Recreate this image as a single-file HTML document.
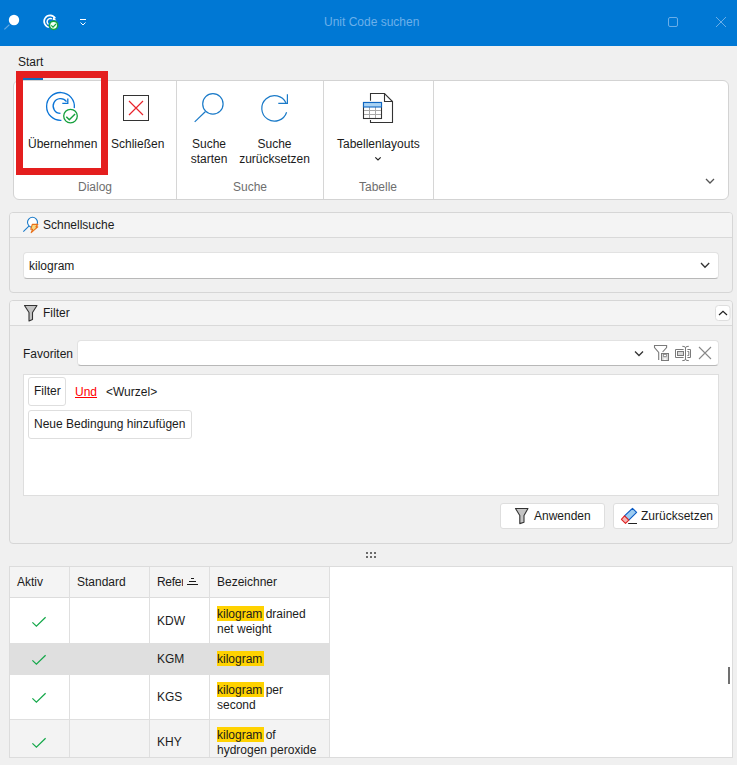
<!DOCTYPE html>
<html><head><meta charset="utf-8">
<style>
*{margin:0;padding:0;box-sizing:border-box}
html,body{width:737px;height:765px;overflow:hidden;background:#f0f0f0;font-family:"Liberation Sans",sans-serif;font-size:12px;color:#1b1b1b}
.a{position:absolute}
.t{position:absolute;white-space:nowrap;line-height:15px}
svg{position:absolute;overflow:visible}
</style></head><body>
<!-- title bar -->
<div class="a" style="left:0;top:0;width:737px;height:46px;background:#0078d4"></div>
<div class="t" style="left:324px;top:15px;color:#6cb0ea;">Unit Code suchen</div>
<svg style="left:0;top:0" width="737" height="46">
  <circle cx="14" cy="20" r="5.2" fill="#fff"/>
  <line x1="9.4" y1="24.6" x2="4.4" y2="29.4" stroke="#62a8e2" stroke-width="1.3"/>
  <path d="M49.5 27.3 A6 6 0 1 1 55.3 18.3" fill="none" stroke="#fff" stroke-width="1.6"/>
  <path d="M49 24.6 A3.2 3.2 0 1 1 51.9 18.9" fill="none" stroke="#fff" stroke-width="1.5"/>
  <path d="M53.2 16.8 L56.4 20.4 L52.6 20.6 Z" fill="#fff"/>
  <circle cx="53.6" cy="25.3" r="5.2" fill="#0078d4"/>
  <circle cx="53.6" cy="25.3" r="4.1" fill="#f4fff6" stroke="#16a53e" stroke-width="1.5"/>
  <path d="M51.3 25.4 L53 27.1 L56 24" fill="none" stroke="#16a53e" stroke-width="1.2"/>
  <line x1="80" y1="19.5" x2="86" y2="19.5" stroke="#fff" stroke-width="1"/>
  <path d="M80.5 22.5 L83 25 L85.5 22.5" fill="none" stroke="#fff" stroke-width="1"/>
  <rect x="668.5" y="17.5" width="9" height="9" rx="1.5" fill="none" stroke="#6aaee8" stroke-width="1"/>
  <path d="M716 17 L726 27 M726 17 L716 27" stroke="#6aaee8" stroke-width="1"/>
</svg>

<!-- tab -->
<div class="t" style="left:18px;top:55px;">Start</div>

<!-- ribbon -->
<div class="a" style="left:13px;top:80px;width:716px;height:120px;background:#fff;border:1px solid #d3d3d3;border-radius:6px"></div>
<div class="a" style="left:23px;top:78px;width:20px;height:2px;background:#0f6cbd"></div>
<div class="a" style="left:176px;top:81px;width:1px;height:118px;background:#d6d6d6"></div>
<div class="a" style="left:323px;top:81px;width:1px;height:118px;background:#d6d6d6"></div>
<div class="a" style="left:433px;top:81px;width:1px;height:118px;background:#d6d6d6"></div>

<svg style="left:0;top:0" width="737" height="210">
  <!-- uebernehmen icon -->
  <path d="M61.4 120.3 A13.9 13.9 0 1 1 74.3 108.2" fill="none" stroke="#0a74d6" stroke-width="1.3"/>
  <path d="M60.5 113.4 A7.4 7.4 0 1 1 66.5 101.6" fill="none" stroke="#0a74d6" stroke-width="1.3"/>
  <path d="M67.8 98.4 V103.3 H62.3" fill="none" stroke="#0a74d6" stroke-width="1.3"/>
  <circle cx="70.5" cy="116.1" r="8.6" fill="#fff"/>
  <circle cx="70.5" cy="116.1" r="6.8" fill="none" stroke="#14a03c" stroke-width="1.3"/>
  <path d="M66.3 116.7 L69.3 119.8 L75.1 114" fill="none" stroke="#14a03c" stroke-width="1.4"/>
  <!-- schliessen icon -->
  <rect x="123.5" y="95.5" width="25" height="25" fill="none" stroke="#333" stroke-width="1"/>
  <path d="M129 101 L143 115 M143 101 L129 115" stroke="#e8232b" stroke-width="1.2"/>
  <!-- suche starten -->
  <circle cx="212.9" cy="103.9" r="10.2" fill="none" stroke="#1a7ac8" stroke-width="1.2"/>
  <line x1="205.5" y1="111.5" x2="194.7" y2="121.9" stroke="#1a7ac8" stroke-width="1.2"/>
  <!-- suche zuruecksetzen -->
  <path d="M286.6 112.2 A12.7 12.7 0 1 1 286 103" fill="none" stroke="#1a7ac8" stroke-width="1.2"/>
  <path d="M287.4 94.2 V103.3 H278.3" fill="none" stroke="#1a7ac8" stroke-width="1.2"/>
  <!-- tabellenlayouts -->
  <path d="M370.5 100.8 V93.5 H384.5 L392.5 101.5 V122.5 H370.5 V120" fill="none" stroke="#333" stroke-width="1.1"/>
  <path d="M384.5 93.5 V101.5 H392.5" fill="none" stroke="#333" stroke-width="1.1"/>
  <rect x="363.5" y="102.5" width="18" height="16" fill="#fff" stroke="#333" stroke-width="1.1"/>
  <path d="M364 110.5 H381 M364 114.5 H381 M369.5 107 V118 M375.5 107 V118" stroke="#a8a8a8" stroke-width="1"/>
  <rect x="363.5" y="102.5" width="18" height="4.5" fill="#a9d2f3" stroke="#0f66c2" stroke-width="1.1"/>
  <path d="M375.3 157.3 L378 160 L380.7 157.3" fill="none" stroke="#222" stroke-width="1.2"/>
  <!-- ribbon collapse chevron -->
  <path d="M706 179 L710 183 L714 179" fill="none" stroke="#555" stroke-width="1.3"/>
</svg>
<!-- red highlight box -->
<div class="a" style="left:16px;top:71px;width:92px;height:104px;border:7px solid #e41e1e"></div>

<div class="t" style="left:28px;top:137px;">Übernehmen</div>
<div class="t" style="left:111px;top:137px;">Schließen</div>
<div class="t" style="left:73px;top:180px;color:#6e6e6e;width:44px;text-align:center">Dialog</div>
<div class="t" style="left:180px;top:137px;width:58px;text-align:center">Suche<br>starten</div>
<div class="t" style="left:236px;top:137px;width:77px;text-align:center">Suche<br>zurücksetzen</div>
<div class="t" style="left:225px;top:180px;color:#6e6e6e;width:50px;text-align:center">Suche</div>
<div class="t" style="left:337px;top:137px;">Tabellenlayouts</div>
<div class="t" style="left:353px;top:180px;color:#6e6e6e;width:50px;text-align:center">Tabelle</div>

<!-- Schnellsuche panel -->
<div class="a" style="left:9px;top:212px;width:724px;height:81px;border:1px solid #d6d6d6;border-radius:4px;background:#f0f0f0"></div>
<div class="a" style="left:10px;top:213px;width:722px;height:25px;background:#f4f4f4;border-radius:3px 3px 0 0;border-bottom:1px solid #d9d9d9"></div>
<svg style="left:0;top:0" width="737" height="300">
  <circle cx="32.5" cy="222.3" r="5" fill="#fff" stroke="#1a7ac8" stroke-width="1.1"/>
  <line x1="28.9" y1="226.2" x2="23.3" y2="231.6" stroke="#1a7ac8" stroke-width="1.1"/>
  <path d="M32.3 224.4 H37.8 L35.9 226.9 H37.8 L31.2 232.6 L32.6 229.2 H30.8 Z" fill="#f6d884" stroke="#e8701a" stroke-width="1.1" stroke-linejoin="round"/>
</svg>
<div class="t" style="left:43px;top:218px;">Schnellsuche</div>
<div class="a" style="left:23px;top:252px;width:696px;height:27px;background:#fff;border:1px solid #e2e2e2;border-bottom:1px solid #b8b8b8;border-radius:4px"></div>
<div class="t" style="left:29px;top:259px;">kilogram</div>
<svg style="left:0;top:0" width="737" height="300">
  <path d="M701 263 L705 267.2 L709.2 263" fill="none" stroke="#333" stroke-width="1.3"/>
</svg>

<!-- Filter panel -->
<div class="a" style="left:9px;top:300px;width:724px;height:244px;border:1px solid #d6d6d6;border-radius:4px;background:#f0f0f0"></div>
<div class="a" style="left:10px;top:301px;width:722px;height:25px;background:#f4f4f4;border-radius:3px 3px 0 0;border-bottom:1px solid #d9d9d9"></div>
<svg style="left:0;top:0" width="737" height="560">
  <path d="M24.5 305.5 H37 L32.5 312.5 V319.5 L29 321 V312.5 Z" fill="#c4c4c4" stroke="#333" stroke-width="1.1" stroke-linejoin="round"/>
  <!-- collapse button -->
  <rect x="715.5" y="305.5" width="14.5" height="15" rx="3" fill="#fff" stroke="#dedede" stroke-width="1"/>
  <path d="M719 315 L723 311.3 L727 315" fill="none" stroke="#222" stroke-width="1.2"/>
</svg>
<div class="t" style="left:43px;top:306px;">Filter</div>

<div class="t" style="left:23px;top:347px;">Favoriten</div>
<div class="a" style="left:77px;top:340px;width:642px;height:26px;background:#fff;border:1px solid #e2e2e2;border-bottom:1px solid #b8b8b8;border-radius:4px"></div>
<svg style="left:0;top:0" width="737" height="560">
  <path d="M635 351.5 L639 355.5 L643 351.5" fill="none" stroke="#333" stroke-width="1.3"/>
  <path d="M658.7 360 V352.4 L654.5 347.6 V345.5 H666.6 V347.6 L662.6 352" stroke="#7a7a7a" stroke-width="1.1" fill="none"/>
  <rect x="661.5" y="353.5" width="7" height="7" fill="#d6d6d6" stroke="#7a7a7a" stroke-width="1"/>
  <rect x="663.5" y="354.5" width="3" height="2" fill="#fff" stroke="#8a8a8a" stroke-width="0.8"/>
  <rect x="663.5" y="358.3" width="3" height="1.6" fill="#fff"/>
  <path d="M683.6 349.5 H675.5 V357.5 H683.6 M687.4 349.5 H690.5 V357.5 H687.4" stroke="#7a7a7a" stroke-width="1" fill="none"/>
  <rect x="677.5" y="351.5" width="6" height="4" fill="#d8d8d8" stroke="#7a7a7a" stroke-width="1"/>
  <path d="M687.4 351.5 H688.8 V355.5 H687.4" stroke="#7a7a7a" stroke-width="1" fill="none"/>
  <path d="M685.5 347.5 V359.5 M682.3 346.3 Q685.5 346 685.5 348 Q685.5 346 688.8 346.3 M682.3 360.6 Q685.5 361 685.5 359 Q685.5 361 688.8 360.6" stroke="#7a7a7a" stroke-width="1" fill="none"/>
  <path d="M699 347 L711 359 M711 347 L699 359" stroke="#888" stroke-width="1.1"/>
</svg>

<!-- filter box -->
<div class="a" style="left:23px;top:374px;width:696px;height:122px;background:#fff;border:1px solid #dedede"></div>
<div class="a" style="left:28px;top:377px;width:38px;height:29px;background:#fff;border:1px solid #dedede;border-radius:3px"></div>
<div class="t" style="left:34px;top:384px;">Filter</div>
<div class="t" style="left:75px;top:385px;color:#f00;text-decoration:underline">Und</div>
<div class="t" style="left:106px;top:385px;">&lt;Wurzel&gt;</div>
<div class="a" style="left:28px;top:410px;width:164px;height:29px;background:#fff;border:1px solid #dedede;border-radius:3px"></div>
<div class="t" style="left:34px;top:417px;">Neue Bedingung hinzufügen</div>

<!-- buttons -->
<div class="a" style="left:500px;top:503px;width:105px;height:26px;background:#fff;border:1px solid #dedede;border-radius:3px"></div>
<div class="a" style="left:613px;top:503px;width:106px;height:26px;background:#fff;border:1px solid #dedede;border-radius:3px"></div>
<svg style="left:0;top:0" width="737" height="560">
  <path d="M515.5 508.5 H528 L524 515.5 V522.3 L519.8 523.6 V515.5 Z" fill="#c4c4c4" stroke="#333" stroke-width="1.1" stroke-linejoin="round"/>
  <path d="M624.5 515.8 L632.5 508.3 L636.6 512.4 L628.8 520.1 Z" fill="#9ccbf0" stroke="#0a5bc4" stroke-width="1.1" stroke-linejoin="round"/>
  <path d="M624.5 515.8 L628.8 520.1 L625.5 523.4 L621.4 519.3 Z" fill="#f4b4b4" stroke="#e02424" stroke-width="1.1" stroke-linejoin="round"/>
  <line x1="628.2" y1="523.5" x2="637" y2="523.5" stroke="#222" stroke-width="1"/>
</svg>
<div class="t" style="left:534px;top:509px;">Anwenden</div>
<div class="t" style="left:641px;top:509px;">Zurücksetzen</div>

<!-- splitter -->
<svg style="left:0;top:0" width="737" height="560">
  <g fill="#6b6b6b">
    <rect x="366" y="552" width="2" height="2"/><rect x="370" y="552" width="2" height="2"/><rect x="374" y="552" width="2" height="2"/>
    <rect x="366" y="556" width="2" height="2"/><rect x="370" y="556" width="2" height="2"/><rect x="374" y="556" width="2" height="2"/>
  </g>
</svg>

<!-- table area -->
<div class="a" style="left:9px;top:566px;width:724px;height:192px;background:#fff;border:1px solid #dcdcdc"></div>
<div class="a" style="left:10px;top:567px;width:320px;height:31px;background:#f4f4f4;border-bottom:1px solid #dcdcdc"></div>
<div class="a" style="left:69px;top:567px;width:1px;height:190px;background:#dfdfdf"></div>
<div class="a" style="left:149px;top:567px;width:1px;height:190px;background:#dfdfdf"></div>
<div class="a" style="left:209px;top:567px;width:1px;height:190px;background:#dfdfdf"></div>
<div class="a" style="left:329px;top:567px;width:1px;height:190px;background:#dfdfdf"></div>
<div class="a" style="left:10px;top:643px;width:320px;height:32px;background:#dfdfdf"></div>
<div class="a" style="left:10px;top:719px;width:320px;height:1px;background:#dfdfdf"></div>
<div class="a" style="left:10px;top:720px;width:59px;height:37px;background:#f3f3f3"></div>
<div class="a" style="left:70px;top:720px;width:79px;height:37px;background:#f3f3f3"></div>
<div class="a" style="left:150px;top:720px;width:59px;height:37px;background:#f3f3f3"></div>
<div class="a" style="left:210px;top:720px;width:119px;height:37px;background:#f3f3f3"></div>

<div class="t" style="left:17px;top:575px;">Aktiv</div>
<div class="t" style="left:77px;top:575px;">Standard</div>
<div class="t" style="left:157px;top:575px;width:26px;overflow:hidden;letter-spacing:-0.3px">Referenz</div>
<svg style="left:0;top:0" width="737" height="765">
  <path d="M190 576.5 H195 M188 579.5 H197 M186 582.5 H199 M190 580.5 H195 M188 583.5 H197" stroke="#fff" stroke-width="1" fill="none" opacity="0"/>
  <g fill="#1a1a1a"><rect x="191" y="578" width="3" height="1"/><rect x="189" y="581" width="7" height="1"/><rect x="187" y="584" width="11" height="1"/></g>
</svg>
<div class="t" style="left:217px;top:575px;">Bezeichner</div>

<svg style="left:0;top:0" width="737" height="765">
  <g fill="none" stroke="#14a84a" stroke-width="1.25">
    <path d="M32.4 622.4 L36.4 626.2 L45.6 617.3"/>
    <path d="M32.4 660.4 L36.4 664.2 L45.6 655.3"/>
    <path d="M32.4 698.4 L36.4 702.2 L45.6 693.3"/>
    <path d="M32.4 743.4 L36.4 747.2 L45.6 738.3"/>
  </g>
</svg>
<div class="t" style="left:157px;top:614px;">KDW</div>
<div class="t" style="left:157px;top:652px;">KGM</div>
<div class="t" style="left:157px;top:690px;">KGS</div>
<div class="t" style="left:157px;top:735px;">KHY</div>

<div class="a" style="left:217px;top:606px;width:47px;height:15px;background:#ffd200"></div>
<div class="a" style="left:217px;top:651px;width:47px;height:15px;background:#ffd200"></div>
<div class="a" style="left:217px;top:682px;width:47px;height:15px;background:#ffd200"></div>
<div class="a" style="left:217px;top:727px;width:47px;height:15px;background:#ffd200"></div>
<div class="t" style="left:217px;top:607px;">kilogram drained<br>net weight</div>
<div class="t" style="left:217px;top:652px;">kilogram</div>
<div class="t" style="left:217px;top:683px;">kilogram per<br>second</div>
<div class="t" style="left:217px;top:728px;">kilogram of<br>hydrogen peroxide</div>

<div class="a" style="left:728px;top:667px;width:2px;height:17px;background:#707070"></div>
</body></html>
